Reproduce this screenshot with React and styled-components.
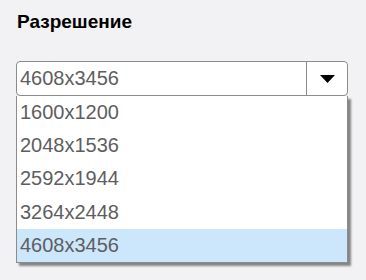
import React from "react";
import styled, { createGlobalStyle } from "styled-components";

const GlobalStyle = createGlobalStyle`
  body {
    margin: 0;
    background: #f2f2f4;
    font-family: "Liberation Sans", Arial, sans-serif;
  }
`;

const Panel = styled.div`
  padding: 11px 16px 0 16px;
  height: 280px;
  box-sizing: border-box;
`;

const Title = styled.h2`
  margin: 0 0 28px 1px;
  font-size: 19px;
  font-weight: bold;
  color: #000;
  line-height: 22px;
`;

const SelectWrap = styled.div`
  position: relative;
  width: 332px;
`;

const SelectBox = styled.div`
  display: flex;
  height: 35px;
  box-sizing: border-box;
  border: 1px solid #8c8c8c;
  border-radius: 4px;
  background: #fff;
`;

const Value = styled.div`
  flex: 1;
  display: flex;
  align-items: center;
  padding-left: 3px;
  font-size: 20px;
  color: #5e5e5e;
`;

const ArrowButton = styled.div`
  width: 39px;
  border-left: 1px solid #8c8c8c;
  display: flex;
  align-items: center;
  justify-content: center;
  padding-left: 1px;
`;

const Menu = styled.ul`
  position: absolute;
  top: 35px;
  left: 0;
  right: 0;
  margin: 0;
  padding: 0;
  list-style: none;
  background: #fff;
  border: 1px solid #8c8c8c;
  border-top: none;
  box-shadow: 3px 3px 2px rgba(0, 0, 0, 0.45);
`;

const Option = styled.li`
  height: 33.2px;
  display: flex;
  align-items: center;
  padding-left: 3px;
  font-size: 20px;
  color: #5e5e5e;
  background: ${(p) => (p.$selected ? "#cce6fc" : "#fff")};
`;

const options = ["1600x1200", "2048x1536", "2592x1944", "3264x2448", "4608x3456"];

export default function App() {
  const current = "4608x3456";
  return (
    <>
      <GlobalStyle />
      <Panel>
        <Title>Разрешение</Title>
        <SelectWrap>
          <SelectBox>
            <Value>{current}</Value>
            <ArrowButton>
              <svg width="15" height="8" viewBox="0 0 15 8">
                <path d="M0 0 H15 L7.5 8 Z" fill="#000" />
              </svg>
            </ArrowButton>
          </SelectBox>
          <Menu>
            {options.map((o) => (
              <Option key={o} $selected={o === current}>
                {o}
              </Option>
            ))}
          </Menu>
        </SelectWrap>
      </Panel>
    </>
  );
}
